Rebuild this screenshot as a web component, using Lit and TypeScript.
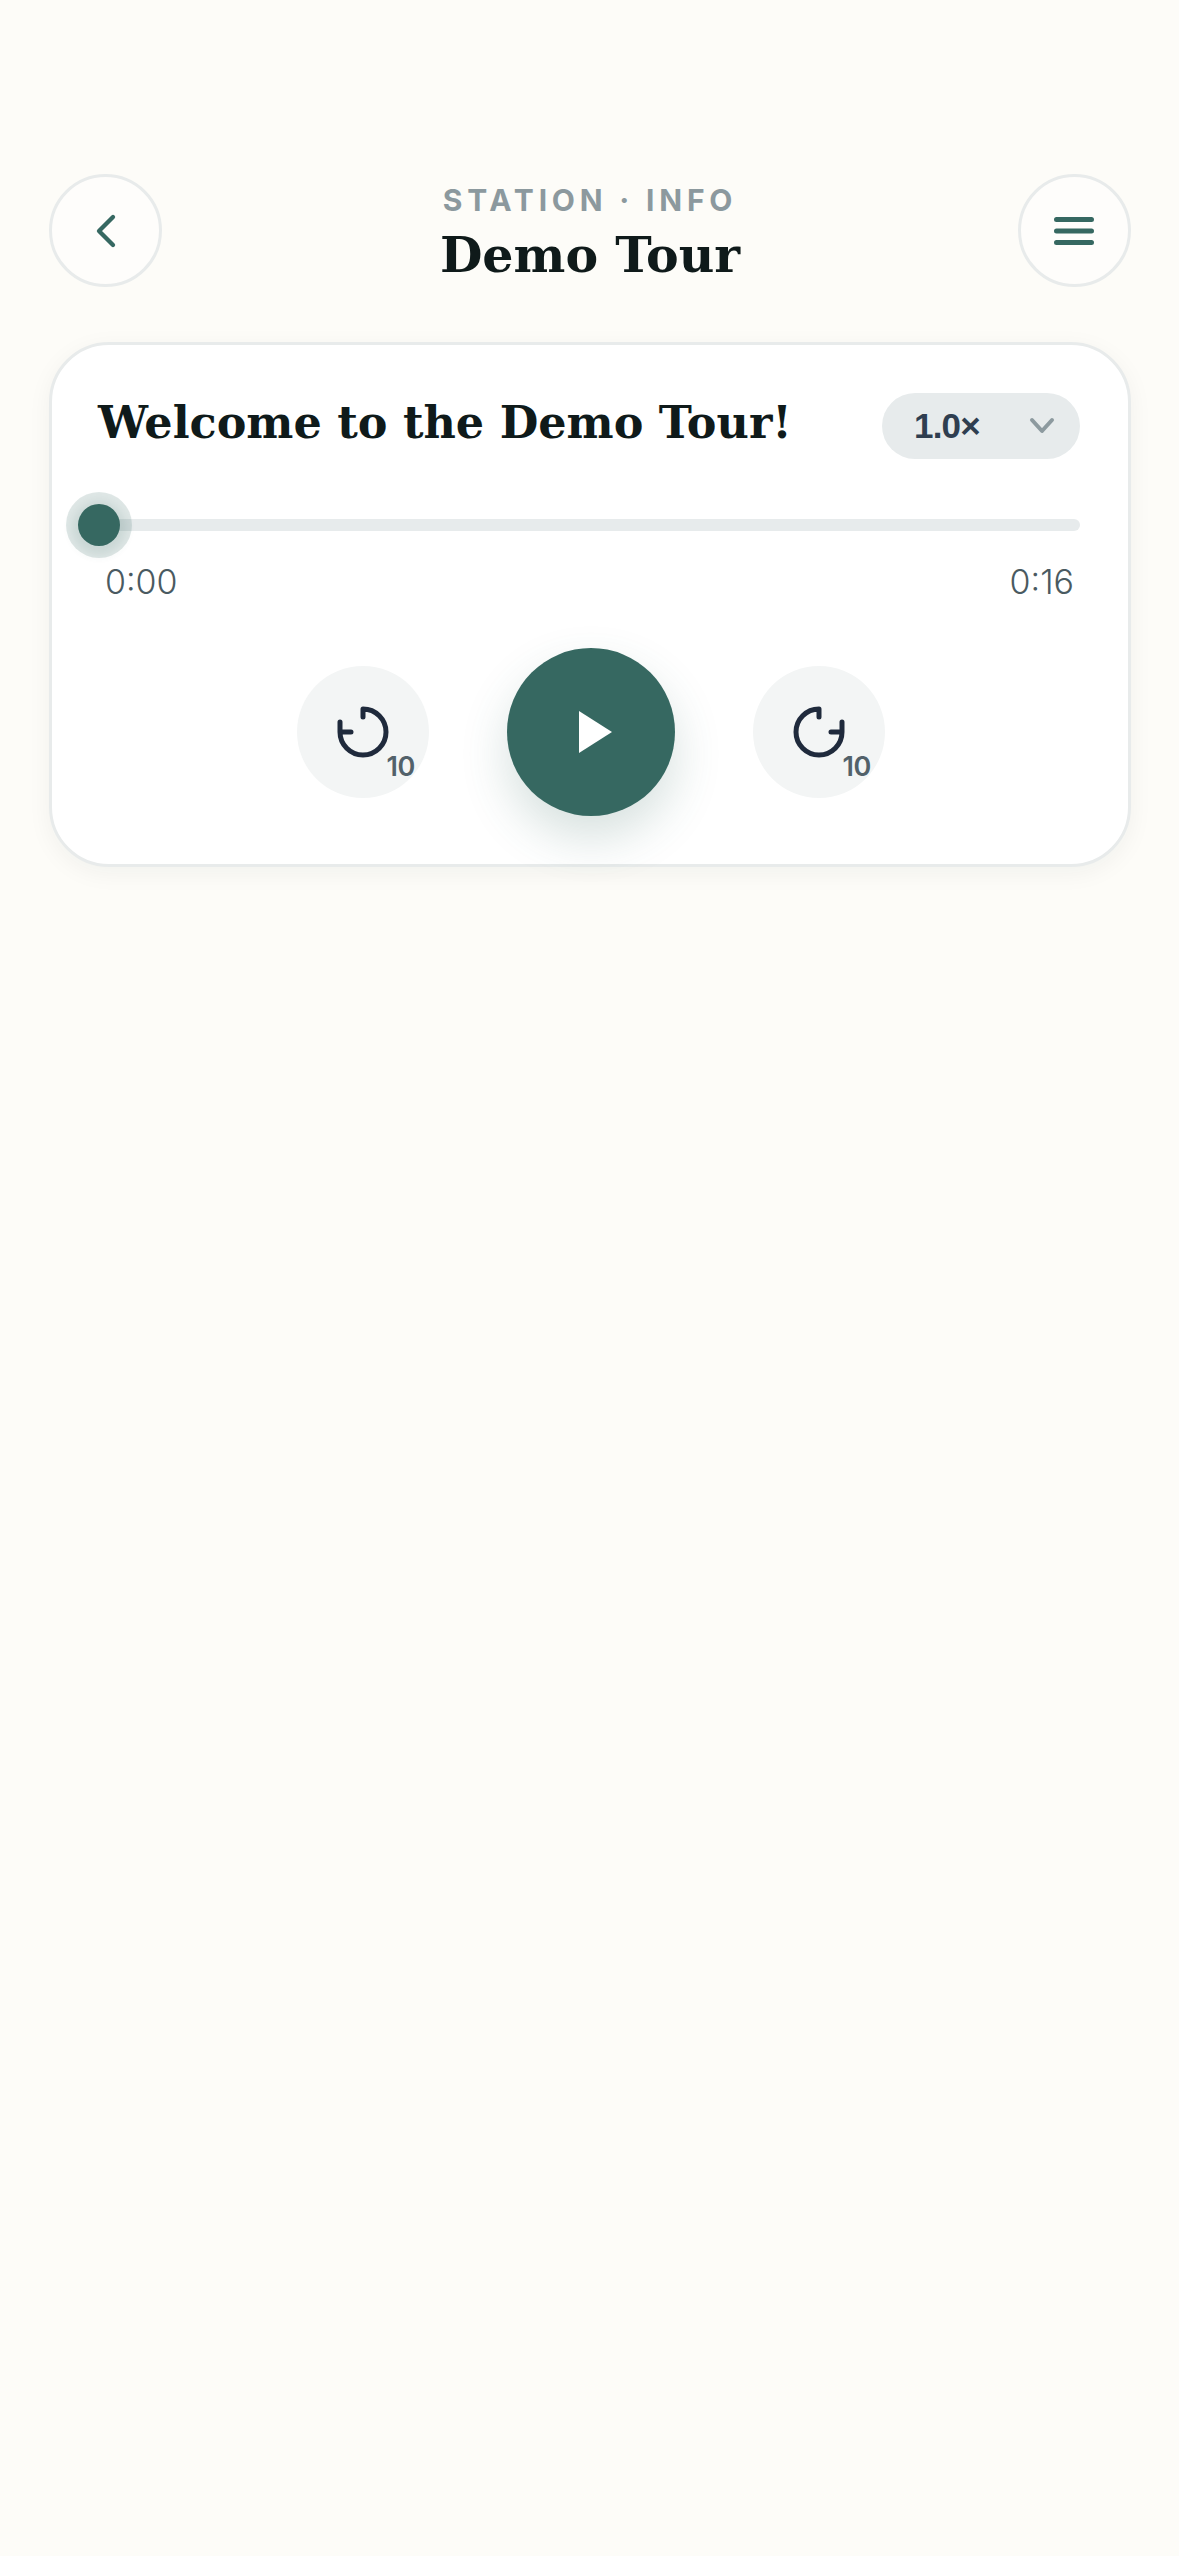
import { LitElement, html, css } from "lit";
import { customElement } from "lit/decorators.js";

@customElement("app-root")
export class AppRoot extends LitElement {
  static styles = css`
    :host { display: block; min-height: 2556px; background: #fdfcf8; box-sizing: border-box; padding: 174px 48px 0 49px; font-family: "Inter", sans-serif; }
    .top { display: flex; align-items: center; justify-content: space-between; height: 113px; }
    .round { width: 113px; height: 113px; box-sizing: border-box; border: 3px solid #e8ebeb; border-radius: 50%; background: #fefdfb; display: flex; align-items: center; justify-content: center; }
    .round svg { display: block; }
    .heading { display: flex; flex-direction: column; align-items: center; padding-top: 6px; }
    .eyebrow { font: 700 30px/36px "Inter", sans-serif; letter-spacing: 4.8px; color: #8c999e; margin-top: 0; }
    .name { font: 700 49px/62px "DejaVu Serif", serif; color: #0f1a1a; margin-top: 6px; }
    .card { margin-top: 55px; height: 525px; box-sizing: border-box; border: 3px solid #e8ebeb; border-radius: 60px; background: #fff; padding: 48px 48px 0 46px; box-shadow: 0 6px 24px rgba(20, 40, 40, 0.05); display: flex; flex-direction: column; }
    .row { display: flex; align-items: center; justify-content: space-between; height: 66px; }
    .title { font: 700 44.5px/60px "DejaVu Serif", serif; color: #0f1a1a; margin: -8px 0 0; }
    .speed { width: 198px; height: 66px; box-sizing: border-box; border-radius: 33px; background: #e7ebec; padding: 0 24px 0 32px; display: flex; align-items: center; justify-content: space-between; font: 700 35px/40px "Liberation Sans", sans-serif; letter-spacing: -0.8px; color: #2f3e50; }
    .track { position: relative; height: 12px; margin-top: 60px; border-radius: 6px; background: #e7ebec; }
    .thumb { position: absolute; left: -20px; top: -15px; width: 42px; height: 42px; border-radius: 50%; background: #366861; box-shadow: 0 0 0 12px rgba(54, 104, 97, 0.16), 0 3px 10px 6px rgba(54, 104, 97, 0.12); }
    .times { display: flex; justify-content: space-between; padding: 0 6px 0 7px; margin-top: 29px; font: 300 34px/44px "Inter", sans-serif; color: #4a5a61; }
    .controls { display: flex; align-items: center; justify-content: center; gap: 78px; margin-top: 44px; padding-left: 3px; }
    .skip { position: relative; width: 132px; height: 132px; border-radius: 50%; background: #f3f5f5; display: flex; align-items: center; justify-content: center; }
    .skip span { position: absolute; left: 90px; top: 84px; font: 600 27px/34px "Inter", sans-serif; letter-spacing: -0.5px; color: #52616a; }
    .play { width: 168px; height: 168px; border-radius: 50%; background: #366861; display: flex; align-items: center; justify-content: center; box-shadow: 0 22px 48px rgba(54, 104, 97, 0.2); }
    .play svg { margin-left: 8px; }
  `;

  render() {
    return html`
      <div class="top">
        <div class="round">
          <svg width="22" height="38" viewBox="0 0 22 38" fill="none" stroke="#366861" stroke-width="4.3" stroke-linecap="round" stroke-linejoin="round"><path d="M18 5 4 19l14 14"/></svg>
        </div>
        <div class="heading">
          <div class="eyebrow">STATION · INFO</div>
          <div class="name">Demo Tour</div>
        </div>
        <div class="round">
          <svg width="42" height="32" viewBox="0 0 42 32" fill="none" stroke="#366861" stroke-width="5" stroke-linecap="round"><path d="M3.500 4.500h35M3.500 16h35M3.500 27.500h35"/></svg>
        </div>
      </div>
      <div class="card">
        <div class="row">
          <h1 class="title">Welcome to the Demo Tour!</h1>
          <div class="speed">
            <span>1.0×</span>
            <svg width="28" height="18" viewBox="0 0 28 18" fill="none" stroke="#8d9a9f" stroke-width="4" stroke-linecap="round" stroke-linejoin="round"><path d="m4 3 10 11L24 3"/></svg>
          </div>
        </div>
        <div class="track"><div class="thumb"></div></div>
        <div class="times"><span>0:00</span><span>0:16</span></div>
        <div class="controls">
          <div class="skip">
            <svg width="56" height="56" viewBox="0 0 56 56" fill="none" stroke="#1f2a3c" stroke-width="5" stroke-linecap="round" stroke-linejoin="round"><path d="M28 13V5a23 23 0 1 1-23 23V18M5 28h11"/></svg>
            <span>10</span>
          </div>
          <div class="play">
            <svg width="36" height="44" viewBox="0 0 36 44" fill="#fff"><path d="M2 1v42l33-21z"/></svg>
          </div>
          <div class="skip">
            <svg width="56" height="56" viewBox="0 0 56 56" fill="none" stroke="#1f2a3c" stroke-width="5" stroke-linecap="round" stroke-linejoin="round"><path d="M28 13V5a23 23 0 1 0 23 23V18M51 28H40"/></svg>
            <span>10</span>
          </div>
        </div>
      </div>
    `;
  }
}
